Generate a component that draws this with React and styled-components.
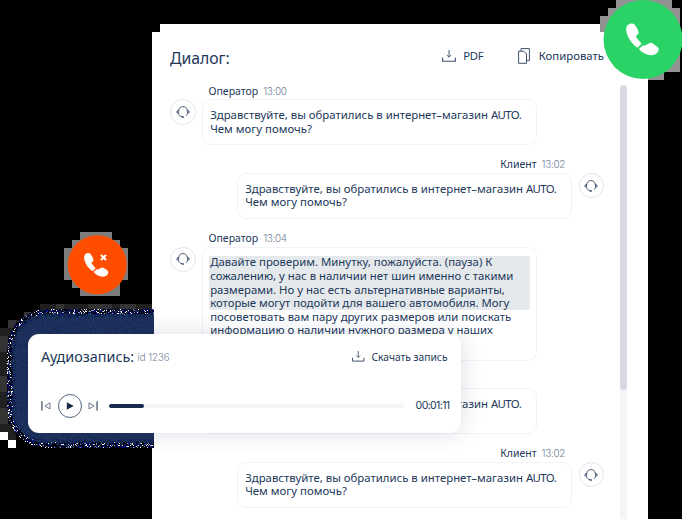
import React from 'react';
import styled, { createGlobalStyle } from 'styled-components';

const ink = '#22385a';
const muted = '#748197';
const sans = '"Noto Sans", "Open Sans", sans-serif';
const digits = 'Inter, "Noto Sans", sans-serif';

const Global = createGlobalStyle`
  * { box-sizing: border-box; }
  body { margin: 0; background: #000; font-family: ${sans}; color: ${ink}; overflow: hidden; }
  svg { display: block; flex: none; }
`;

const Stage = styled.main`
  position: relative;
  width: 682px;
  height: 519px;
  overflow: hidden;
  background: #000;
  padding: 24px 34px 0 152px;
`;

const Panel = styled.section`
  height: 495px;
  background: #fff;
  clip-path: polygon(8px 0, 100% 0, 100% 100%, 0 100%, 0 8px, 8px 8px);
  padding-left: 18px;
  display: flex;
  flex-direction: column;
  overflow: hidden;
`;

const Header = styled.header`
  height: 60.6px;
  flex: none;
  display: flex;
  align-items: center;
  padding: 3px 44px 0 0;
`;

const Title = styled.h1`
  margin: 4px auto 0 0;
  font-size: ${p => p.$size}px;
  line-height: 22px;
  font-weight: 400;
  white-space: nowrap;
`;

const Action = styled.button`
  display: flex;
  align-items: center;
  gap: ${p => p.$gap || 7}px;
  margin-left: ${p => p.$left || 0}px;
  padding: 0;
  border: 0;
  background: none;
  color: ${ink};
  font: 400 ${p => p.$size || 11.36}px/16px ${sans};
  letter-spacing: ${p => p.$track || 0}px;
  white-space: nowrap;
`;

const Body = styled.div`
  display: flex;
  flex: 1;
  min-height: 0;
`;

const Chat = styled.div`
  width: 450px;
  flex: none;
`;

const Track = styled.div`
  width: 7px;
  height: 460px;
  background: #f3f5f7;
  border-radius: 4px;
`;

const Thumb = styled.div`
  height: 305px;
  border-radius: 4px;
  background: #d9dae1;
`;

const Message = styled.article`
  width: ${p => (p.$client ? 434 : 366.5)}px;
  height: ${p => p.$height || 73.7}px;
  display: grid;
  grid-template-columns: ${p => (p.$client ? '334.5px 25.5px' : '25.5px 334.5px')};
  grid-template-rows: 14.6px auto;
  column-gap: ${p => (p.$client ? 7 : 6.5)}px;
  justify-content: ${p => (p.$client ? 'end' : 'start')};
  align-content: start;
`;

const Meta = styled.div`
  grid-row: 1;
  grid-column: ${p => (p.$client ? 1 : 2)};
  display: flex;
  justify-content: ${p => (p.$client ? 'flex-end' : 'flex-start')};
  align-items: baseline;
  gap: 5px;
  padding: 0 6.5px;
  font-size: 10.5px;
  line-height: 13px;
`;

const Time = styled.time`
  font: 300 10px/13px ${digits};
  letter-spacing: -0.35px;
  color: ${muted};
`;

const Avatar = styled.div`
  grid-row: 2;
  grid-column: ${p => (p.$client ? 2 : 1)};
  width: 25.5px;
  height: 25.5px;
  border: 1px solid #e2e5ea;
  border-radius: 50%;
  display: grid;
  place-items: center;
`;

const Bubble = styled.div`
  grid-row: 2;
  grid-column: ${p => (p.$client ? 1 : 2)};
  height: ${p => p.$height || 46}px;
  border: 1px solid #f2f3f6;
  border-radius: 9px;
  padding: 7.9px 6px 0;
  font-size: 11.38px;
  line-height: 13.6px;
`;

const Mark = styled.div`
  background: ${p => (p.$on ? 'linear-gradient(transparent .6px, #e5e9ec .6px)' : 'transparent')};
  border-radius: 3px;
`;

const Line = styled.div`
  padding-left: 1.2px;
  letter-spacing: ${p => p.$track || 0}px;
  white-space: nowrap;
`;

const Tight = styled.span`
  letter-spacing: -0.6px;
`;

const Player = styled.section`
  position: absolute;
  left: 28px;
  top: 333.6px;
  width: 433px;
  height: 99px;
  border-radius: 11px;
  background: #fff;
  box-shadow: 0 0 22px rgba(31, 48, 88, 0.16);
  padding: 12px 11.5px 0 13px;
`;

const PlayerTop = styled.div`
  display: flex;
  align-items: center;
  height: 22px;
  padding-right: 2px;
`;

const PlayerTitle = styled(Title)`
  margin: 0;
`;

const RecordId = styled.span`
  margin: 3px auto 0 3.5px;
  font: 300 9.7px/16px ${digits};
  color: ${muted};
  letter-spacing: -0.05px;
`;

const Controls = styled.div`
  display: flex;
  align-items: center;
  height: 24px;
  margin-top: 26.6px;
`;

const PlayButton = styled.div`
  width: 24px;
  height: 24px;
  margin: 0 6.5px;
  border: 1px solid #53627d;
  border-radius: 50%;
  display: grid;
  place-items: center;
`;

const Progress = styled.div`
  width: 295px;
  height: 4px;
  margin-left: 11px;
  border-radius: 2px;
  background: #f3f5f6;
`;

const Played = styled.div`
  width: 34.5px;
  height: 100%;
  border-radius: 2px;
  background: #172a4d;
`;

const Duration = styled.time`
  margin-left: auto;
  font: 400 10.6px/16px ${digits};
  letter-spacing: -0.65px;
`;

const Overlay = styled.svg`
  position: absolute;
  left: ${p => p.$x}px;
  top: ${p => p.$y}px;
`;

const Headset = () => (
  <svg width="14" height="12" viewBox="0 0 14 12" fill="none" stroke="#3f4f6b" strokeWidth=".9" strokeLinecap="round">
    <path d="M2.6 4.3C2.9 2 4.6.6 7 .6s4.1 1.4 4.4 3.7M2.5 7.5c.3 1.8 1.6 3 3.4 3.2M11.5 7.5c-.2.9-.6 1.5-1.1 2" />
    <path d="M2.6 4.5v2.800C1.400 7.300.8 6.800.8 5.900s.6-1.400 1.800-1.400ZM11.400 4.500v2.800c1.200 0 1.800-.5 1.800-1.400s-.6-1.400-1.800-1.400Z" fill="#8e98a9" strokeWidth=".7" />
    <path d="M6.2 10.9h1.200" strokeWidth="1.500" />
  </svg>
);

const Download = ({ size = 14 }) => (
  <svg width={size} height={size * 12 / 14} viewBox="0 0 14 12" fill="none" stroke="#3f4f6b">
    <path d="M.6 8v3.3h12.8V8" strokeWidth="1.1" strokeLinejoin="round" strokeLinecap="round" />
    <path d="M7 0v7M4.8 5 7 7.2 9.2 5" strokeWidth=".95" />
  </svg>
);

const Copy = () => (
  <svg width="12" height="16" viewBox="0 0 12 16" fill="none" stroke="#3f4f6b">
    <path d="M3 2.8V.6h8.4v11.8H9" />
    <path d="M.6 3.2h5.2L8.5 6v9.3H.6Z" />
  </svg>
);

const Skip = ({ next }) => (
  <svg width="10" height="10" viewBox="0 0 10 10" fill="none" stroke="#6a7489">
    <g transform={next ? 'translate(10 0) scale(-1 1)' : undefined}>
      <path d="M.9.3v9.2" strokeWidth="1.6" />
      <path d="M9 1.9v6L4 4.9Z" />
    </g>
  </svg>
);

const Handset = props => (
  <g fill="#fff" {...props}>
    <path d="M6 .4C3 .2.2 2.5.2 6c0 7.200 5.500 15 11.300 18.800L15.600 20.700 10.400 14.500C9.700 13.500 10 12.900 10.800 12.300L12.900 10.300C11.900 5.900 9.400.7 6 .4Z" />
    <path d="M12.900 26 17.300 21.900C18.200 22.900 18.800 22.800 19.800 22.200L23.300 20.200C24.400 19.600 25.500 19.800 26.700 20.600L31.600 24C33.200 25.300 33 27.600 31.700 29.200 27.500 34.500 18.500 32.500 12.900 26Z" />
  </g>
);

const Blocks = ({ rows, fill }) => (
  <g fill={fill} shapeRendering="crispEdges">
    {rows.map(([x, y, w, h], i) => <rect key={i} x={x} y={y} width={w} height={h} />)}
  </g>
);

function grainPaths() {
  const paths = {};
  let seed = 4821;
  const rand = () => {
    seed = (seed * 1664525 + 1013904223) >>> 0;
    return seed / 4294967296;
  };
  const edge = ['#000', '#000', '#000', '#000', '#050560', '#0000a4', '#14224d', '#fff', '#123c4a', '#8f93c0', '#0a0a38', '#000'];
  const core = ['#1c2f5c', '#1c2f5c', '#1f3362', '#1a2d57', '#25315e', '#1c3560', '#1a2b50'];
  for (let y = 309; y < 448; y++) {
    for (let x = 6; x < 154; x++) {
      const r = 38;
      const dx = Math.max(0, 7 + r - x);
      const dy = Math.max(0, 309 + r - y, y - (447 - r));
      const depth = r - Math.hypot(dx, dy);
      if (depth < 0) continue;
      const wobble = depth + rand() * 2 - 1;
      const set = wobble < 4.5 ? edge : wobble < 8 ? ['#19254d', '#1c2f5c', '#101d6a', '#174454', '#142043'] : core;
      const color = set[Math.floor(rand() * set.length)];
      paths[color] = (paths[color] || '') + `M${x} ${y}h1v1h-1z`;
    }
  }
  return Object.entries(paths);
}
const grain = grainPaths();

const Halo = () => (
  <Overlay $x={0} $y={0} width="154" height="460">
    <Blocks fill="#202020" rows={[[40, 304, 112, 8], [24, 312, 16, 8], [8, 320, 16, 8], [0, 328, 8, 104], [8, 328, 8, 8], [8, 424, 8, 16]]} />
    <Blocks fill="#343434" rows={[[56, 304, 8, 8], [88, 304, 24, 8], [120, 304, 16, 8], [24, 312, 8, 8], [8, 320, 8, 8], [0, 336, 8, 16], [0, 376, 8, 16], [0, 408, 8, 16]]} />
    <g shapeRendering="crispEdges">
      {grain.map(([color, d]) => <path key={color} fill={color} d={d} />)}
    </g>
    <Blocks fill="#fff" rows={[[0, 432, 8, 8], [8, 440, 8, 8]]} />
  </Overlay>
);

const AnswerBadge = () => (
  <Overlay $x={600} $y={0} width="82" height="82">
    <Blocks fill="#929292" rows={[[16, 0, 56, 8], [8, 8, 72, 8], [0, 16, 80, 16], [48, 32, 32, 40], [48, 72, 16, 8]]} />
    <circle cx="43" cy="39.500" r="39.500" fill="#29d366" />
    <Handset transform="translate(26 23)" />
  </Overlay>
);

const DeclineBadge = () => (
  <Overlay $x={64} $y={232} width="66" height="66">
    <Blocks fill="#7d7d7d" rows={[[16, 0, 32, 8], [8, 8, 48, 8], [0, 16, 64, 32], [8, 48, 48, 8], [16, 56, 40, 8]]} />
    <circle cx="33.300" cy="32.700" r="29.500" fill="#ff4d00" />
    <Handset transform="translate(20 20.800) scale(.742)" />
    <path d="m37 23 5 5m0-5-5 5" stroke="#fff" strokeWidth="2" />
  </Overlay>
);

const Greeting = () => (
  <>
    <Line>Здравствуйте, вы обратились в интернет–магазин <Tight>AUTO.</Tight></Line>
    <Line>Чем могу помочь?</Line>
  </>
);

const Entry = ({ who, time, client, height, bubble, children }) => (
  <Message $client={client} $height={height}>
    <Meta $client={client}>{who}<Time>{time}</Time></Meta>
    <Avatar $client={client}><Headset /></Avatar>
    <Bubble $client={client} $height={bubble}>{children}</Bubble>
  </Message>
);

export default function App() {
  return (
    <Stage>
      <Global />
      <Panel>
        <Header>
          <Title $size={15.75}>Диалог:</Title>
          <Action $track={-0.35}><Download />PDF</Action>
          <Action $left={34.5} $gap={9}><Copy />Копировать</Action>
        </Header>
        <Body>
          <Chat>
            <Entry who="Оператор" time="13:00"><Greeting /></Entry>
            <Entry who="Клиент" time="13:02" client><Greeting /></Entry>
            <Entry who="Оператор" time="13:04" height={141.6} bubble={114}>
              <Mark $on>
                <Line>Давайте проверим. Минутку, пожалуйста. (пауза) К</Line>
                <Line>сожалению, у нас в наличии нет шин именно с такими</Line>
                <Line>размерами. Но у нас есть альтернативные варианты,</Line>
                <Line $track={-0.05}>которые могут подойти для вашего автомобиля. Могу</Line>
              </Mark>
              <Mark>
                <Line>посоветовать вам пару других размеров или поискать</Line>
                <Line>информацию о наличии нужного размера у наших</Line>
              </Mark>
            </Entry>
            <Entry who="Оператор" time="13:04"><Greeting /></Entry>
            <Entry who="Клиент" time="13:02" client><Greeting /></Entry>
          </Chat>
          <Track><Thumb /></Track>
        </Body>
      </Panel>
      <Halo />
      <Player>
        <PlayerTop>
          <PlayerTitle as="h2" $size={14.4}>Аудиозапись:</PlayerTitle>
          <RecordId>id 1236</RecordId>
          <Action $size={10.25} $gap={6.5}><Download size={12.5} />Скачать запись</Action>
        </PlayerTop>
        <Controls>
          <Skip />
          <PlayButton>
            <svg width="8" height="8" viewBox="0 0 8 8"><path d="M.8.3v7.4L7.700 4Z" fill="#172a4d" /></svg>
          </PlayButton>
          <Skip next />
          <Progress><Played /></Progress>
          <Duration>00:01:11</Duration>
        </Controls>
      </Player>
      <DeclineBadge />
      <AnswerBadge />
    </Stage>
  );
}
